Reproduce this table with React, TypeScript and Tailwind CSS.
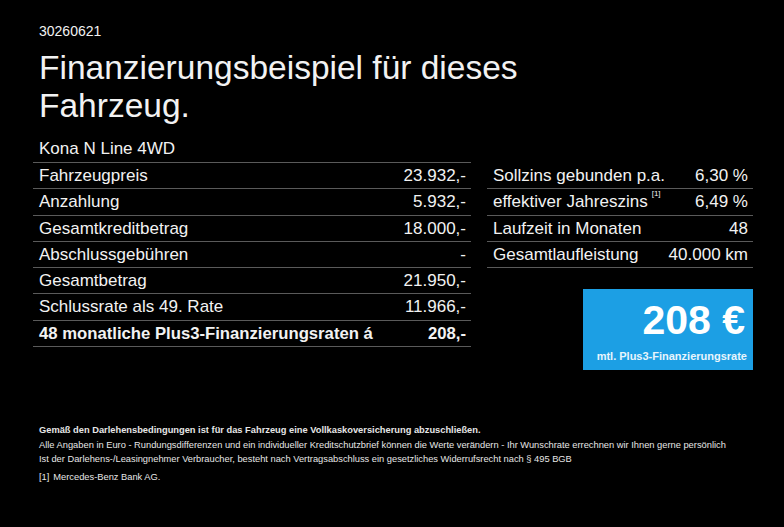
export default function App() {
  const left: [string, string][] = [
    ["Fahrzeugpreis", "23.932,-"],
    ["Anzahlung", "5.932,-"],
    ["Gesamtkreditbetrag", "18.000,-"],
    ["Abschlussgebühren", "-"],
    ["Gesamtbetrag", "21.950,-"],
    ["Schlussrate als 49. Rate", "11.966,-"],
  ];

  return (
    <main className="w-[784px] h-[527px] bg-black text-[#f2f2f2] font-['Liberation_Sans',Arial,sans-serif] overflow-hidden">
      <div className="pt-[22px] pl-[39px] text-[14px] leading-[18px]">30260621</div>

      {/* HEADING */}
      <h1 className="mt-[9px] pl-[39px] text-[33.5px] leading-[38px] font-normal">
        Finanzierungsbeispiel für dieses
        <br />
        Fahrzeug.
      </h1>

      {/* TABLES */}
      <section className="mt-[11px] pl-[33px] flex items-start gap-[16px]">
        <div className="w-[438px] text-[17px]">
          <div className="h-[27px] pl-[6px] flex items-center border-b border-[#5a5a5a]">
            Kona N Line 4WD
          </div>
          {left.map(([name, value]) => (
            <div
              key={name}
              className="h-[26.3px] pl-[6px] pr-[5px] flex items-center justify-between border-b border-[#5a5a5a]"
            >
              <span>{name}</span>
              <span>{value}</span>
            </div>
          ))}
          <div className="h-[26.3px] pl-[6px] pr-[5px] flex items-center justify-between border-b border-[#5a5a5a] font-bold text-[16.7px]">
            <span>48 monatliche Plus3-Finanzierungsraten á</span>
            <span>208,-</span>
          </div>
        </div>

        <div className="w-[266px] pt-[27px] text-[17px]">
          <div className="h-[26.3px] pl-[6px] pr-[5px] flex items-center justify-between border-b border-[#5a5a5a]">
            <span>Sollzins gebunden p.a.</span>
            <span>6,30 %</span>
          </div>
          <div className="h-[26.3px] pl-[6px] pr-[5px] flex items-center justify-between border-b border-[#5a5a5a]">
            <span className="flex items-start">
              effektiver Jahreszins
              <span className="ml-[4px] text-[8px] leading-[8px] mt-[1px]">[1]</span>
            </span>
            <span>6,49 %</span>
          </div>
          <div className="h-[26.3px] pl-[6px] pr-[5px] flex items-center justify-between border-b border-[#5a5a5a]">
            <span>Laufzeit in Monaten</span>
            <span>48</span>
          </div>
          <div className="h-[26.3px] pl-[6px] pr-[5px] flex items-center justify-between border-b border-[#5a5a5a]">
            <span>Gesamtlaufleistung</span>
            <span>40.000 km</span>
          </div>

          <div className="mt-[21px] ml-auto w-[170px] h-[81px] bg-[#1c9fe4] text-white flex flex-col items-end pr-[6px] pt-[9px]">
            <span className="pr-[2px] text-[41px] leading-[44px] font-bold">208 €</span>
            <span className="mt-[8px] text-[11px] leading-[13px] font-bold text-white/90">
              mtl. Plus3-Finanzierungsrate
            </span>
          </div>
        </div>
      </section>

      {/* FOOTNOTES */}
      <footer className="mt-[53px] pl-[39px] text-[9.3px] leading-[14.5px] text-[#e6e6e6]">
        <p className="font-bold">
          Gemäß den Darlehensbedingungen ist für das Fahrzeug eine Vollkaskoversicherung abzuschließen.
        </p>
        <p>
          Alle Angaben in Euro - Rundungsdifferenzen und ein individueller Kreditschutzbrief können die Werte verändern - Ihr Wunschrate errechnen wir Ihnen gerne persönlich
        </p>
        <p>
          Ist der Darlehens-/Leasingnehmer Verbraucher, besteht nach Vertragsabschluss ein gesetzliches Widerrufsrecht nach § 495 BGB
        </p>
        <p className="mt-[3px]">
          <span>[1]</span>
          <span className="ml-[4px]">Mercedes-Benz Bank AG.</span>
        </p>
      </footer>
    </main>
  );
}
